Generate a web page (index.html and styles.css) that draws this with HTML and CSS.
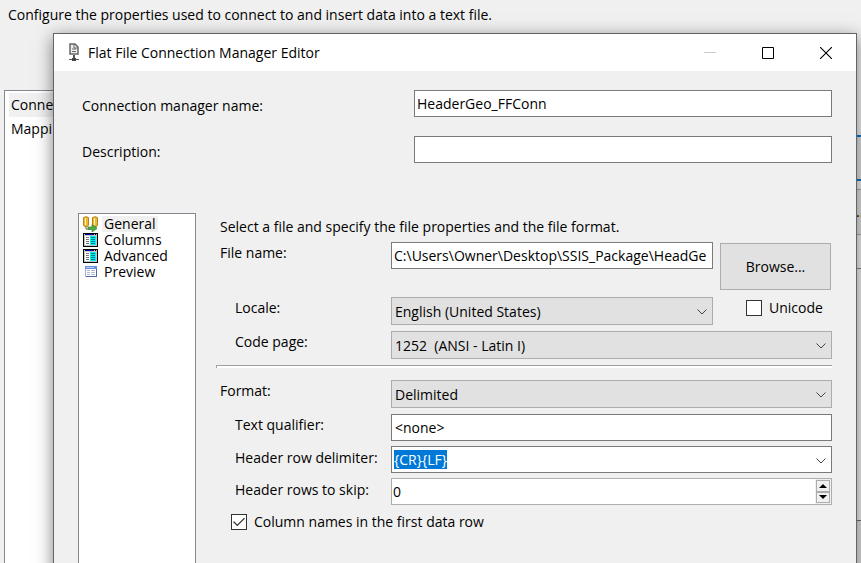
FILE: index.html
```html
<!DOCTYPE html>
<html lang="en">
<head>
<meta charset="utf-8">
<title>Flat File Connection Manager Editor</title>
<link rel="stylesheet" href="styles.css">
</head>
<body>
<main class="host">
  <p class="host-intro">Configure the properties used to connect to and insert data into a text file.</p>
  <div class="host-body">
    <ul class="host-pages">
      <li class="host-page host-page-current">Conne</li>
      <li class="host-page">Mappi</li>
    </ul>
    <div class="host-actions">
      <button class="host-button host-button-focus" type="button" aria-label="New"></button>
      <button class="host-button host-button-more" type="button">...</button>
      <div class="host-row"></div>
      <div class="host-footer"></div>
    </div>
  </div>
</main>

<section class="dialog" role="dialog" aria-labelledby="dialog-title">
  <header class="titlebar">
    <svg class="title-icon" width="12" height="20" viewBox="0 0 12 20" aria-hidden="true">
      <path d="M2 1h5l3 3v7H2z" fill="#eee" stroke="#666" stroke-width="1.500"/>
      <path d="M6 1v4h4M4 6h4M4 8.500h4" fill="none" stroke="#666"/>
      <path d="M6 12v5" stroke="#555" stroke-width="2"/>
      <path d="M1 16h10v1H1z" fill="#555"/>
      <path d="M4 15h4v3H4z" fill="#444"/>
    </svg>
    <h1 class="title" id="dialog-title">Flat File Connection Manager Editor</h1>
    <button class="window-button" type="button" aria-label="Minimize" disabled>
      <svg width="12" height="12" viewBox="0 0 12 12"><path d="M0 5h12v1H0z" fill="#ccc"/></svg>
    </button>
    <button class="window-button" type="button" aria-label="Maximize">
      <svg width="12" height="12" viewBox="0 0 12 12"><path d="M.5.5h11v11H.5z" fill="none" stroke="#000"/></svg>
    </button>
    <button class="window-button" type="button" aria-label="Close">
      <svg width="12" height="12" viewBox="0 0 12 12"><path d="M0 0l12 12M12 0L0 12" stroke="#000" stroke-width="1.1"/></svg>
    </button>
  </header>

  <form class="content">
    <div class="identity">
      <label class="identity-label" for="name">Connection manager name:</label>
      <input class="field" id="name" type="text" value="HeaderGeo_FFConn">
      <label class="identity-label" for="description">Description:</label>
      <input class="field" id="description" type="text">
    </div>

    <div class="panes">
      <ul class="pages">
        <li class="page">
          <svg class="page-icon" width="16" height="16" viewBox="0 0 16 16" aria-hidden="true">
            <path d="M3 10v3h4M13 9v4" fill="none" stroke="#7c6a3a"/>
            <path d="M.5 1.500q2.500-1.500 5 0v7.500q0 1.500-2.500 1.500T.5 9z" fill="#f0b92a" stroke="#b08420"/>
            <path d="M9.500 1.500q2.500-1.500 5 0v7.500q0 1.500-2.500 1.500T9.500 9z" fill="#f0b92a" stroke="#b08420"/>
            <path d="M2 2h1v7H2zM11 2h1v7h-1z" fill="#fff3bd"/>
            <path d="M5 11h4V8.500l5 4-5 3.500v-2.500H5z" fill="#4fae45" stroke="#2c7a28" stroke-width=".6"/>
          </svg>
          <span class="page-name page-name-current">General</span>
        </li>
        <li class="page">
          <svg class="page-icon" width="16" height="16" viewBox="0 0 16 16" aria-hidden="true">
            <path d="M0 1h15v14H0z"/><path d="M1 2h13v12H1z" fill="#c4c4c4"/>
            <path d="M2 2h9v1H2z" fill="#0000a8"/><path d="M12 2h1v1h-1z"/>
            <path d="M2 4h5v9H2z" fill="#fff"/><path d="M7 4h6v9H7z" fill="#00f0f0"/>
            <path d="M3 5.500h3M3 7.500h3M3 9.500h3M3 11.500h3" stroke="#777"/>
            <path d="M8 5.500h4M8 7.500h4M8 9.500h4M8 11.500h4" stroke="#007c90"/>
          </svg>
          <span class="page-name">Columns</span>
        </li>
        <li class="page">
          <svg class="page-icon" width="16" height="16" viewBox="0 0 16 16" aria-hidden="true">
            <path d="M0 1h15v14H0z"/><path d="M1 2h13v12H1z" fill="#c4c4c4"/>
            <path d="M2 2h9v1H2z" fill="#0000a8"/><path d="M12 2h1v1h-1z"/>
            <path d="M2 4h5v9H2z" fill="#fff"/><path d="M7 4h6v9H7z" fill="#00f0f0"/>
            <path d="M3 5.500h3M3 7.500h3M3 9.500h3M3 11.500h3" stroke="#777"/>
            <path d="M8 5.500h4M8 7.500h4M8 9.500h4M8 11.500h4" stroke="#007c90"/>
          </svg>
          <span class="page-name">Advanced</span>
        </li>
        <li class="page">
          <svg class="page-icon" width="16" height="16" viewBox="0 0 16 16" aria-hidden="true">
            <path d="M2.500 2.500h11v10h-11z" fill="#fff" stroke="#9db0e0"/>
            <path d="M2 2h12v3H2z" fill="#6b8ddc"/><path d="M3 3h8v1H3z" fill="#b4c9f6"/>
            <path d="M13 5h1v8H3v-1h10z" fill="#5366a0"/>
            <path d="M4 6.500h3M8 6.500h4M4 8.500h3M8 8.500h4M4 10.500h3M8 10.500h4" stroke="#b4bcc4"/>
          </svg>
          <span class="page-name">Preview</span>
        </li>
      </ul>

      <div class="settings">
        <p class="hint">Select a file and specify the file properties and the file format.</p>
        <div class="file-group">
          <label class="label" for="file">File name:</label>
          <input class="field" id="file" type="text" value="C:\Users\Owner\Desktop\SSIS_Package\HeadGe">
          <button class="browse" type="button">Browse...</button>

          <label class="label label-sub" for="locale">Locale:</label>
          <div class="combo">
            <select class="select" id="locale"><option>English (United States)</option></select>
            <svg class="chevron" width="10" height="6" viewBox="0 0 10 6" aria-hidden="true"><path d="M.5.5L5 5 9.500.5"/></svg>
          </div>
          <label class="check check-unicode"><input class="box" type="checkbox">Unicode</label>

          <label class="label label-sub" for="codepage">Code page:</label>
          <div class="combo combo-wide">
            <select class="select" id="codepage"><option>1252&nbsp; (ANSI - Latin I)</option></select>
            <svg class="chevron" width="10" height="6" viewBox="0 0 10 6" aria-hidden="true"><path d="M.5.5L5 5 9.500.5"/></svg>
          </div>
        </div>

        <hr class="rule">

        <div class="format-group">
          <label class="label" for="format">Format:</label>
          <div class="combo">
            <select class="select" id="format"><option>Delimited</option></select>
            <svg class="chevron" width="10" height="6" viewBox="0 0 10 6" aria-hidden="true"><path d="M.5.5L5 5 9.500.5"/></svg>
          </div>

          <label class="label label-sub" for="qualifier">Text qualifier:</label>
          <input class="field field-inset" id="qualifier" type="text" value="&lt;none&gt;">

          <label class="label label-sub label-tall" for="delimiter">Header row delimiter:</label>
          <div class="combo">
            <input class="field" id="delimiter" type="text" value="{CR}{LF}">
            <svg class="chevron" width="10" height="6" viewBox="0 0 10 6" aria-hidden="true"><path d="M.5.5L5 5 9.500.5"/></svg>
          </div>

          <label class="label label-sub label-tall" for="skip">Header rows to skip:</label>
          <div class="spinner">
            <input class="spinner-field" id="skip" type="number" min="0" value="0">
            <div class="spinner-buttons">
              <button class="step" type="button" aria-label="Increase"><svg width="8" height="4" viewBox="0 0 8 4"><path d="M4 0l4 4H0z"/></svg></button>
              <button class="step" type="button" aria-label="Decrease"><svg width="8" height="4" viewBox="0 0 8 4"><path d="M0 0h8L4 4z"/></svg></button>
            </div>
          </div>
        </div>

        <label class="check check-names"><input class="box" type="checkbox" checked>Column names in the first data row</label>
      </div>
    </div>
  </form>
</section>
<script src="script.js"></script>
</body>
</html>
```
FILE: styles.css
```css
* { box-sizing: border-box; }

body {
  margin: 0;
  height: 100vh;
  overflow: hidden;
  position: relative;
  background: #f0f0f0;
  color: #000;
  font: 14px/20px "Open Sans", "Noto Sans", sans-serif;
}

input, select, button { font: inherit; color: inherit; margin: 0; border-radius: 0; }
ul { list-style: none; margin: 0; padding: 0; }

/* Window behind the dialog */
.host { display: flex; flex-direction: column; height: 100%; }
.host-intro { margin: 0; padding: 5px 8px; height: 90px; }
.host-body { flex: 1; display: flex; justify-content: space-between; padding-left: 4px; }
.host-pages { width: 160px; padding: 2px 4px; background: #fff; border: 1px solid #828790; border-bottom: 0; }
.host-page { height: 24px; padding: 2px; white-space: nowrap; }
.host-page-current { background: #f0f0f0; }
.host-actions { width: 8px; padding-top: 45px; display: flex; flex-direction: column; }
.host-button { height: 46px; padding: 0 0 0 3px; overflow: hidden; text-align: left; background: #e1e1e1; border: 1px solid #adadad; border-width: 1px 0; }
.host-button-focus { border: 2px solid #0078d7; border-width: 2px 0; }
.host-button-more { margin-top: 8px; }
.host-row { height: 34px; border-bottom: 1px solid #828790; }
.host-footer { flex: 1; margin-top: 251px; border-top: 1px solid #707070; background: #e1e1e1; }

/* Dialog */
.dialog {
  position: absolute;
  top: 33px;
  right: 4px;
  bottom: -24px;
  left: 53px;
  display: flex;
  flex-direction: column;
  background: #f0f0f0;
  border: 1px solid #646464;
  box-shadow: 0 4px 16px rgba(0, 0, 0, .5);
}
.titlebar { display: flex; align-items: center; height: 37px; padding: 0 1px 0 14px; background: #fff; }
.title { flex: 1; margin: 0 0 0 8px; font-size: 14px; font-weight: 400; }
.window-button { width: 58px; height: 36px; padding: 0; border: 0; background: none; display: grid; place-items: center; }

.content { flex: 1; display: flex; flex-direction: column; padding: 19px 24px 0; }
.identity { display: grid; grid-template-columns: 332px 1fr; row-gap: 19px; padding-left: 4px; }
.identity-label { padding-top: 6px; }
.field {
  width: 100%;
  min-width: 0;
  height: 27px;
  padding: 0 2px;
  background: #fff;
  border: 1px solid #7a7a7a;
  outline: 0;
}
.field-inset { padding-left: 3px; }
::selection { background: #0078d7; color: #fff; }

.panes { flex: 1; display: flex; gap: 20px; margin-top: 50px; }
.pages { width: 118px; padding: 2px 4px; background: #fff; border: 1px solid #828790; }
.page { display: flex; align-items: center; gap: 3px; height: 16px; line-height: 16px; }
.page-name { padding: 0 2px; }
.page-name-current { background: #f0f0f0; }

.settings { flex: 1; min-width: 0; }
.hint { margin: 0; padding: 4px 4px 5px; }
.file-group, .format-group { display: grid; align-items: start; }
.file-group { grid-template-columns: 175px 1fr 119px; grid-template-rows: 55px 34px 34px; }
.format-group { grid-template-columns: 175px 1fr; grid-template-rows: 34px 32px 32px 27px; }
.label { padding-left: 4px; line-height: 22px; white-space: nowrap; }
.label-sub { padding-left: 19px; }
.label-tall { line-height: 24px; }
.browse { height: 47px; margin: 1px 1px 0 7px; background: #e1e1e1; border: 1px solid #adadad; }
.combo { position: relative; }
.combo-wide { grid-column: 2 / 4; }
.select {
  display: block;
  appearance: none;
  width: 100%;
  height: 28px;
  padding: 1px 24px 0 3px;
  background: #e1e1e1;
  border: 1px solid #adadad;
}
.chevron { position: absolute; right: 6px; top: 12px; fill: none; stroke: #444; pointer-events: none; }

.rule { height: 3px; margin: 0 0 12px; border: 0; border-top: 1px solid #a0a0a0; border-left: 1px solid #a0a0a0; background: #fff; }

.spinner { display: flex; height: 27px; background: #fff; border: 1px solid #adadad; }
.spinner-field { flex: 1; min-width: 0; padding: 0 1px; border: 0; outline: 0; background: none; appearance: textfield; }
.spinner-field::-webkit-inner-spin-button { appearance: none; margin: 0; }
.spinner-buttons { display: flex; flex-direction: column; width: 16px; padding: 1px; background: #f0f0f0; }
.step { flex: 1; display: grid; place-items: center; padding: 0; background: #f0f0f0; border: 1px solid #adadad; }

.check { display: flex; align-items: center; gap: 7px; height: 22px; white-space: nowrap; }
.check-unicode { margin-left: 33px; }
.check-names { margin: 6px 0 0 15px; }
.box { appearance: none; flex: none; width: 16px; height: 16px; background: #fff; border: 1px solid #333; display: grid; place-items: center; }
.box:checked::before { content: ""; width: 12px; height: 10px; background: #333; clip-path: polygon(0 50%, 9% 42%, 36% 74%, 92% 8%, 100% 16%, 36% 92%); }
```
FILE: script.js
```js
const delimiter = document.getElementById("delimiter");
delimiter.focus({ preventScroll: true });
delimiter.select();

const skip = document.getElementById("skip");
const [up, down] = document.querySelectorAll(".step");
up.addEventListener("click", () => skip.stepUp());
down.addEventListener("click", () => skip.stepDown());
```
